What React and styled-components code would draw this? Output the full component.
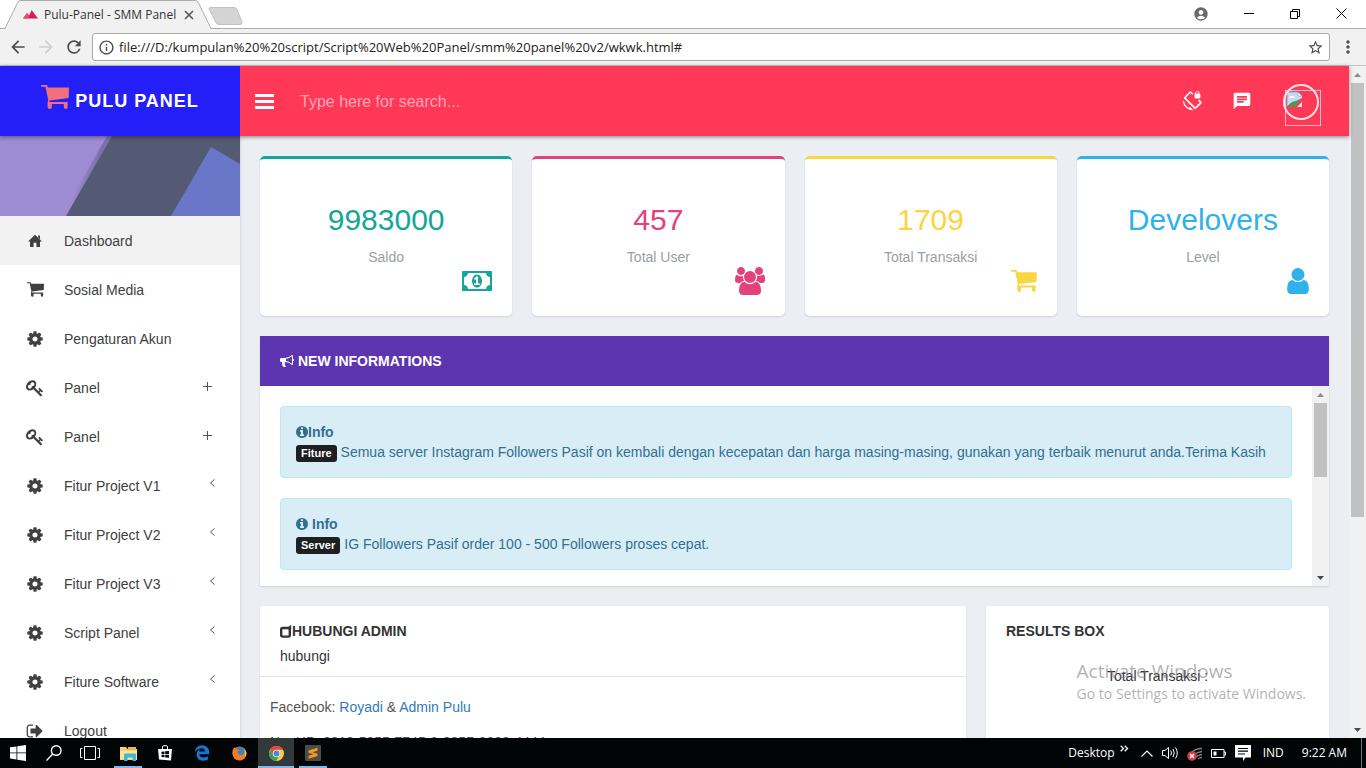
import React from "react";
import styled, { createGlobalStyle } from "styled-components";
import {
  MdAccountCircle,
  MdArrowBack,
  MdArrowForward,
  MdChat,
  MdInfoOutline,
  MdMoreVert,
  MdRefresh,
  MdScreenLockRotation,
  MdStarBorder,
} from "react-icons/md";
import { FaEdgeLegacy } from "react-icons/fa";

const uiFont = `"Open Sans", "Noto Sans", sans-serif`;
const pageFont = `"Liberation Sans", Arial, sans-serif`;

const GlobalStyle = createGlobalStyle`
  *, *::before, *::after { box-sizing: border-box; }
  html, body { margin: 0; padding: 0; }
  body { font-family: ${pageFont}; font-size: 14px; line-height: 20px; color: #333; }
  button { border: 0; padding: 0; margin: 0; background: none; font: inherit; color: inherit; cursor: pointer; }
  h1, h2, h3, p, ul { margin: 0; padding: 0; font-weight: normal; font-size: inherit; }
  ul { list-style: none; }
  svg { display: block; flex: none; }
`;

/* ---------- glyphs ---------- */

const glyphs = {
  cog: ["0 0 1792 1792", "M1152 896q0-106-75-181t-181-75-181 75-75 181 75 181 181 75 181-75 75-181zm512-109v222q0 12-8 23t-20 13l-185 28q-19 54-39 91 35 50 107 138 10 12 10 25t-9 23q-27 37-99 108t-94 71q-12 0-26-9l-138-108q-44 23-91 38-16 136-29 186-7 28-36 28h-222q-14 0-24.5-8.5t-11.5-21.5l-28-184q-49-16-90-37l-141 107q-10 9-25 9-14 0-25-11-126-114-165-168-7-10-7-23 0-12 8-23 15-21 51-66.5t54-70.5q-27-50-41-99l-183-27q-13-2-21-12.5t-8-23.5v-222q0-12 8-23t19-13l186-28q14-46 39-92-40-57-107-138-10-12-10-24 0-10 9-23 26-36 98.5-107.5t94.5-71.5q13 0 26 10l138 107q44-23 91-38 16-136 29-186 7-28 36-28h222q14 0 24.5 8.5t11.5 21.5l28 184q49 16 90 37l142-107q9-9 24-9 13 0 25 10 129 119 165 170 7 8 7 22 0 12-8 23-15 21-51 66.5t-54 70.5q26 50 41 98l183 28q13 2 21 12.5t8 23.5z"],
  key: ["0 0 1792 1792", "M832 512q0-80-56-136t-136-56-136 56-56 136q0 42 19 83-41-19-83-19-80 0-136 56t-56 136 56 136 136 56 136-56 56-136q0-42-19-83 41 19 83 19 80 0 136-56t56-136zm851 704q0 17-49 66t-66 49q-9 0-28.5-16t-36.5-33-38.5-40-24.5-26l-96 96 220 220q28 28 28 68 0 42-39 81t-81 39q-40 0-68-28l-671-671q-176 131-365 131-163 0-265.5-102.5t-102.5-265.5q0-160 95-313t248-248 313-95q163 0 265.5 102.5t102.5 265.5q0 189-131 365l355 355 96-96q-3-3-26-24.5t-40-38.5-33-36.5-16-28.5q0-17 49-66t66-49q13 0 23 10 6 6 46 44.5t82 79.5 86.5 86 73 78 28.5 41z"],
  signOut: ["0 0 1792 1792", "M704 1440q0 4 1 20t.5 26.5-3 23.5-10 19.5-20.5 6.5h-320q-119 0-203.5-84.5t-84.5-203.5v-704q0-119 84.5-203.5t203.5-84.5h320q13 0 22.5 9.5t9.5 22.5q0 4 1 20t.5 26.5-3 23.5-10 19.5-20.5 6.5h-320q-66 0-113 47t-47 113v704q0 66 47 113t113 47h312l11.5 1 11.5 3 8 5.5 7 9 2 13.5zm928-544q0 26-19 45l-544 544q-19 19-45 19t-45-19-19-45v-288h-448q-26 0-45-19t-19-45v-384q0-26 19-45t45-19h448v-288q0-26 19-45t45-19 45 19l544 544q19 19 19 45z"],
  user: ["256 128 1280 1536", "M1536 1399q0 109-62.5 187t-150.5 78h-854q-88 0-150.5-78t-62.5-187q0-85 8.5-160.5t31.5-152 58.5-131 94-89 134.5-34.5q131 128 313 128t313-128q76 0 134.5 34.5t94 89 58.5 131 31.5 152 8.5 160.5zm-256-887q0 159-112.5 271.5t-271.5 112.5-271.5-112.5-112.5-271.5 112.5-271.5 271.5-112.5 271.5 112.5 112.5 271.5z"],
  users: ["-64 0 1920 1792", "M529 896q-162 5-265 128h-134q-82 0-138-40.5t-56-118.5q0-353 124-353 6 0 43.5 21t97.5 42.5 119 21.5q67 0 133-23-5 37-5 66 0 159 90 294zm1071 637q0 120-73 189.5t-194 69.5h-874q-121 0-194-69.5t-73-189.5q0-53 3.5-103.5t14-109 26.5-108.5 43-97.5 62-81 85.5-53.5 111.5-20q10 0 43 21.5t73 48 107 48 135 21.5 135-21.5 107-48 73-48 43-21.5q61 0 111.5 20t85.5 53.5 62 81 43 97.5 26.5 108.5 14 109 3.5 103.5zm-1024-1277q0 106-75 181t-181 75-181-75-75-181 75-181 181-75 181 75 75 181zm704 384q0 159-112.5 271.5t-271.5 112.5-271.5-112.5-112.5-271.5 112.5-271.5 271.5-112.5 271.5 112.5 112.5 271.5zm576 225q0 78-56 118.5t-138 40.5h-134q-103-123-265-128 90-135 90-294 0-29-5-66 66 23 133 23 59 0 119-21.5t97.5-42.5 43.5-21q124 0 124 353zm-128-609q0 106-75 181t-181 75-181-75-75-181 75-181 181-75 181 75 75 181z"],
  money: ["0 0 1920 1792", "M768 1152h384v-96h-128v-448h-114l-148 137 77 80q42-37 55-57h2v288h-128v96zm512-256q0 70-21 142t-59.5 134-101.5 101-138 39-138-39-101.5-101-59.5-134-21-142 21-142 59.5-134 101.5-101 138-39 138 39 101.5 101 59.5 134 21 142zm512 256v-512q-106 0-181-75t-75-181h-1152q0 106-75 181t-181 75v512q106 0 181 75t75 181h1152q0-106 75-181t181-75zm128-832v1152q0 26-19 45t-45 19h-1792q-26 0-45-19t-19-45v-1152q0-26 19-45t45-19h1792q26 0 45 19t19 45z"],
  bullhorn: ["0 0 1792 1792", "M1664 640q53 0 90.5 37.5t37.5 90.5-37.5 90.5-90.5 37.5v384q0 52-38 90t-90 38q-417-347-812-380-58 19-91 66t-31 100.5 40 92.5q-20 33-23 65.5t6 58 33.5 55 48 50 61.5 50.5q-29 58-111.5 83t-168.5 11.5-132-55.5q-7-23-29.5-87.5t-32-94.5-23-89-15-101 3.5-98.5 22-110.5h-122q-66 0-113-47t-47-113v-192q0-66 47-113t113-47h480q435 0 896-384 52 0 90 38t38 90v384zm-128 604v-954q-394 302-768 343v270q377 42 768 341z"],
  info: ["128 128 1536 1536", "M1152 1376v-160q0-14-9-23t-23-9h-96v-512q0-14-9-23t-23-9h-320q-14 0-23 9t-9 23v160q0 14 9 23t23 9h96v320h-96q-14 0-23 9t-9 23v160q0 14 9 23t23 9h448q14 0 23-9t9-23zm-128-896v-160q0-14-9-23t-23-9h-192q-14 0-23 9t-9 23v160q0 14 9 23t23 9h192q14 0 23-9t9-23zm640 416q0 209-103 385.5t-279.5 279.5-385.5 103-385.5-103-279.5-279.5-103-385.5 103-385.5 279.5-279.5 385.5-103 385.5 103 279.5 279.5 103 385.5z"],
  home: ["0 0 16 16", "M8 1.8 15 8.4H13V14H9.4V9.8H6.600V14H3V8.400H1L8 1.8ZM11.200 2.600H13V6.200L11.200 4.400Z"],
  cart: ["0 0 28 24", "M0 0H6L6.7 2.4H28L27.7 13 8.600 15.400 8.200 17H26.600V22.200Q26.600 24 25 24T22.800 22.200V19H10.800V22.200Q10.800 24 9 24T6.600 22.200V17.500L7.300 15.200 4.400 1.800H0Z"],
};

const Glyph = ({ name, size = 18, height }) => {
  const [box, path] = glyphs[name];
  return (
    <svg width={size} height={height || size} viewBox={box} fill="currentColor" aria-hidden="true">
      <path d={path} />
    </svg>
  );
};

/* ---------- browser frame ---------- */

const Screen = styled.div`
  display: flex;
  flex-direction: column;
  height: 100vh;
  overflow: hidden;
`;

const TabStrip = styled.div`
  display: flex;
  flex: none;
  height: 29px;
  background: #fff;
  border-bottom: 1px solid #adadad;
  font-family: ${uiFont};
`;

const Tab = styled.div`
  position: relative;
  display: flex;
  align-items: center;
  gap: 6px;
  width: 206px;
  height: 29px;
  margin-left: 5px;
  padding: 0 16px 0 18px;
  font-size: 12px;
  color: #333;
  > * { position: relative; }
  > svg:first-child { position: absolute; left: 0; top: 0; }
`;

const TabTitle = styled.span`
  flex: 1;
  white-space: nowrap;
`;

const NewTab = styled.button`
  height: 29px;
  margin-left: -3px;
  padding-top: 1px;
`;

const WindowControls = styled.div`
  display: flex;
  align-items: center;
  margin-left: auto;
  padding-right: 2px;
  height: 27px;
`;

const WindowButton = styled.button`
  display: flex;
  align-items: center;
  justify-content: center;
  width: ${(p) => (p.$wide ? "50px" : "46px")};
  height: 26px;
  color: ${(p) => (p.$wide ? "#6a6a6a" : "#000")};
`;

const Toolbar = styled.div`
  display: flex;
  align-items: center;
  flex: none;
  height: 37px;
  padding: 0 8px 0 4px;
  background: #f1f1f1;
  border-bottom: 1px solid #c4c4c4;
  color: #4d4d4d;
`;

const ToolButton = styled.button`
  display: flex;
  align-items: center;
  justify-content: center;
  width: 28px;
  height: 28px;
  color: ${(p) => (p.$faded ? "#cfcfcf" : "#4d4d4d")};
`;

const MenuButton = styled(ToolButton)`
  width: 20px;
  margin-left: 8px;
`;

const Omnibox = styled.label`
  display: flex;
  align-items: center;
  flex: 1;
  gap: 4px;
  height: 28px;
  margin-left: 4px;
  padding: 0 5px;
  background: #fff;
  border: 1px solid #a9a9a9;
  border-radius: 3px;
`;

const Address = styled.input`
  flex: 1;
  min-width: 0;
  padding: 0;
  border: 0;
  outline: 0;
  font-family: ${uiFont};
  font-size: 13px;
  line-height: 20px;
  color: #222;
`;

/* ---------- scroll bars ---------- */

const Track = styled.div`
  display: flex;
  flex-direction: column;
  flex: none;
  width: 17px;
  background: #f1f1f1;
`;

const ScrollArrow = styled.button`
  display: flex;
  align-items: center;
  justify-content: center;
  flex: none;
  height: 17px;
`;

const Lane = styled.div`
  flex: 1;
  padding: 0 2px;
`;

const Thumb = styled.div`
  height: ${(p) => p.$size};
  background: #c1c1c1;
`;

const ScrollBar = ({ size }) => (
  <Track>
    <ScrollArrow aria-label="Scroll up">
      <svg width="7" height="4" viewBox="0 0 7 4"><path d="M3.5 0 7 4H0Z" fill="#8a8a8a" /></svg>
    </ScrollArrow>
    <Lane><Thumb $size={size} /></Lane>
    <ScrollArrow aria-label="Scroll down">
      <svg width="7" height="4" viewBox="0 0 7 4"><path d="M0 0H7L3.5 4Z" fill="#4a4a4a" /></svg>
    </ScrollArrow>
  </Track>
);

/* ---------- page shell ---------- */

const Viewport = styled.div`
  display: flex;
  flex: 1;
  min-height: 0;
`;

const Page = styled.div`
  display: flex;
  flex-direction: column;
  flex: 1;
  min-width: 0;
  background: #ebeef2;
`;

const Header = styled.header`
  position: relative;
  z-index: 2;
  display: flex;
  flex: none;
  height: 70px;
  background: #ff3857;
  box-shadow: 0 1px 4px rgba(0, 0, 0, 0.45);
`;

const Brand = styled.a`
  display: flex;
  align-items: center;
  justify-content: center;
  gap: 6px;
  flex: none;
  width: 240px;
  background: #241ff8;
  color: #fff;
  font-size: 18px;
  font-weight: bold;
  letter-spacing: 1px;
  text-decoration: none;
  svg { color: #f2707c; margin-bottom: 8px; }
`;

const HeaderBar = styled.div`
  display: flex;
  align-items: center;
  flex: 1;
  padding: 0 28px 0 14px;
  color: #fff;
`;

const HeaderButton = styled.button`
  display: flex;
  align-items: center;
  justify-content: center;
  width: ${(p) => (p.$narrow ? "20px" : "50px")};
  height: 40px;
`;

const Search = styled.input`
  flex: 1;
  min-width: 0;
  margin-left: 26px;
  padding: 1px 0 0;
  border: 0;
  outline: 0;
  background: transparent;
  font-family: ${pageFont};
  font-size: 16px;
  line-height: 20px;
  color: #fff;
  &::placeholder { color: #ffa5b3; opacity: 1; }
`;

const Avatar = styled.button`
  width: 40px;
  height: 44px;
  margin: 6px 0 0 14px;
`;

const Columns = styled.div`
  display: flex;
  flex: 1;
  min-height: 0;
`;

const Sidebar = styled.nav`
  flex: none;
  width: 240px;
  overflow: hidden;
  background: #fff;
  box-shadow: 0 0 3px rgba(0, 0, 0, 0.2);
`;

const Cover = styled.div`
  height: 80px;
  overflow: hidden;
`;

const NavLink = styled.a`
  display: flex;
  align-items: center;
  height: 49px;
  padding: 0 24px 0 26px;
  background: ${(p) => (p.$active ? "#f2f2f2" : "transparent")};
  color: #404040;
  font-size: 14px;
  text-decoration: none;
`;

const NavIcon = styled.span`
  display: flex;
  justify-content: center;
  width: 18px;
  margin-right: 20px;
`;

const NavLabel = styled.span`
  flex: 1;
`;

const NavSign = styled.span`
  padding: ${(p) => (p.$plus ? "0 4px 2px 0" : "0 0 5px")};
`;

const Content = styled.main`
  flex: 1;
  min-width: 0;
  padding: 20px;
  overflow: hidden;
`;

const Grid = styled.div`
  display: grid;
  grid-template-columns: repeat(12, 1fr);
  gap: 20px;
  align-items: start;
`;

/* ---------- cards ---------- */

const Card = styled.section`
  grid-column: span ${(p) => p.$span};
  min-width: 0;
  background: #fff;
  border-radius: ${(p) => (p.$square ? "0" : "3px")};
  box-shadow: 0 1px 2px rgba(0, 0, 0, 0.12);
  overflow: hidden;
`;

const StatCard = styled(Card)`
  display: flex;
  flex-direction: column;
  align-items: center;
  height: 160px;
  padding: 44px 20px 0;
  border-top: 3px solid ${(p) => p.$tone};
  border-radius: 5px;
  color: ${(p) => p.$tone};
`;

const StatValue = styled.h2`
  font-size: 30px;
  line-height: 34px;
`;

const StatLabel = styled.p`
  margin-top: 10px;
  color: #98a0a6;
`;

const StatIcon = styled.span`
  display: flex;
  align-items: center;
  justify-content: center;
  align-self: flex-end;
  height: 30px;
  margin-top: -1px;
`;

const Banner = styled.header`
  display: flex;
  align-items: center;
  gap: 4px;
  height: 50px;
  padding: 0 20px;
  background: #5e35b1;
  color: #fff;
`;

const CardTitle = styled.h3`
  display: flex;
  align-items: center;
  font-size: 14px;
  font-weight: bold;
`;

const Feed = styled.div`
  display: flex;
  height: 200px;
`;

const FeedList = styled.div`
  display: flex;
  flex-direction: column;
  flex: 1;
  gap: 20px;
  min-width: 0;
  padding: 20px;
  overflow: hidden;
`;

const Notice = styled.article`
  padding: 15px;
  background: #d9edf7;
  border: 1px solid #bce8f1;
  border-radius: 4px;
  color: #31708f;
`;

const NoticeTitle = styled.h4`
  display: flex;
  align-items: center;
  gap: ${(p) => (p.$tight ? "0" : "4px")};
  margin: 0;
  font-size: 14px;
`;

const NoticeText = styled.p`
  display: flex;
  align-items: center;
  gap: 4px;
  white-space: nowrap;
`;

const Badge = styled.span`
  padding: 0 5px;
  margin-top: 2px;
  background: #1d1f20;
  border-radius: 3px;
  color: #fff;
  font-size: 11px;
  font-weight: bold;
  line-height: 17px;
`;

const CardHead = styled.header`
  padding: 15px 20px 10px;
  border-bottom: ${(p) => (p.$ruled ? "1px solid #e6e6e6" : "0")};
`;

const Subtitle = styled.p`
  margin-top: 5px;
`;

const CardBody = styled.div`
  display: flex;
  flex-direction: column;
  gap: 15px;
  padding: 20px 10px;
  color: #555;
  text-align: ${(p) => (p.$centered ? "center" : "left")};
`;

const ResultBody = styled(CardBody)`
  padding: 15px 10px 80px;
  color: #333;
`;

const Link = styled.a`
  color: #337ab7;
  text-decoration: none;
`;

const Watermark = styled.aside`
  position: absolute;
  right: 60px;
  bottom: 64px;
  z-index: 3;
  font-family: ${uiFont};
  font-size: 14px;
  line-height: 20px;
  font-weight: 300;
  color: rgba(125, 125, 125, 0.6);
  pointer-events: none;
`;

const WatermarkTitle = styled.p`
  font-size: 19px;
  line-height: 26px;
`;

/* ---------- taskbar ---------- */

const Taskbar = styled.footer`
  display: flex;
  flex: none;
  height: 30px;
  background: #010506;
  color: #fff;
  font-family: ${uiFont};
  font-size: 12px;
`;

const TaskGroup = styled.div`
  display: flex;
  gap: ${(p) => (p.$apps ? "1px" : "0")};
  margin-right: 2px;
`;

const TaskButton = styled.button`
  position: relative;
  display: flex;
  align-items: center;
  justify-content: center;
  width: 36px;
  height: 30px;
  background: ${(p) => (p.$active ? "#33383b" : "transparent")};
  &::after {
    content: "";
    position: absolute;
    bottom: 0;
    left: ${(p) => (p.$active ? "0" : "4px")};
    right: ${(p) => (p.$active ? "0" : "4px")};
    height: 2px;
    background: ${(p) => (p.$active || p.$open ? "#7ab8ee" : "transparent")};
  }
`;

const Tray = styled.div`
  display: flex;
  align-items: center;
  margin-left: auto;
  padding-right: 4px;
`;

const TrayButton = styled.button`
  display: flex;
  align-items: center;
  justify-content: center;
  width: ${(p) => (p.$narrow ? "20px" : "24px")};
  height: 30px;
`;

const TrayText = styled.span`
  margin: 0 ${(p) => p.$after || "0"} 0 ${(p) => p.$before || "0"};
  white-space: nowrap;
`;

const Edge = styled.span`
  width: 1px;
  height: 30px;
  background: #6c7072;
`;

/* ---------- data ---------- */

const navItems = [
  { icon: "home", label: "Dashboard", active: true },
  { icon: "cart", label: "Sosial Media" },
  { icon: "cog", label: "Pengaturan Akun" },
  { icon: "key", label: "Panel", sign: "plus" },
  { icon: "key", label: "Panel", sign: "plus" },
  { icon: "cog", label: "Fitur Project V1", sign: "left" },
  { icon: "cog", label: "Fitur Project V2", sign: "left" },
  { icon: "cog", label: "Fitur Project V3", sign: "left" },
  { icon: "cog", label: "Script Panel", sign: "left" },
  { icon: "cog", label: "Fiture Software", sign: "left" },
  { icon: "signOut", label: "Logout" },
];

const stats = [
  { value: "9983000", label: "Saldo", tone: "#16a596", icon: <Glyph name="money" size={30} height={28} /> },
  { value: "457", label: "Total User", tone: "#e3437b", icon: <Glyph name="users" size={30} height={28} /> },
  { value: "1709", label: "Total Transaksi", tone: "#fad541", icon: <Glyph name="cart" size={26} height={22} /> },
  { value: "Develovers", label: "Level", tone: "#2fb2ec", icon: <Glyph name="user" size={22} height={26} /> },
];

const notices = [
  {
    tight: true,
    title: "Info",
    badge: "Fiture",
    text: "Semua server Instagram Followers Pasif on kembali dengan kecepatan dan harga masing-masing, gunakan yang terbaik menurut anda.Terima Kasih",
  },
  { title: "Info", badge: "Server", text: "IG Followers Pasif order 100 - 500 Followers proses cepat." },
];

/* ---------- parts ---------- */

const BrowserChrome = () => (
  <>
    <TabStrip>
      <Tab>
        <svg width="206" height="29" viewBox="0 0 206 29">
          <path d="M0 29 13 2Q14 .5 16 .5H190Q192 .5 193 2L206 29Z" fill="#f1f1f1" />
          <path d="M0 28.5 13 2Q14 .5 16 .5H190Q192 .5 193 2L206 28.5" fill="none" stroke="#adadad" />
        </svg>
        <svg width="15" height="10" viewBox="0 0 15 10">
          <path d="M0 8.500 4 3 6.200 5.500 8.600 0 15 8.500Z" fill="#d81b60" />
          <path d="M4 3 6.200 5.500 5 8.500H0Z" fill="#e8505f" />
        </svg>
        <TabTitle>Pulu-Panel - SMM Panel</TabTitle>
        <button aria-label="Close tab">
          <svg width="12" height="12" viewBox="0 0 12 12" stroke="#555" strokeWidth="1.6"><path d="M2 2 10 10M10 2 2 10" /></svg>
        </button>
      </Tab>
      <NewTab aria-label="New tab">
        <svg width="36" height="22" viewBox="0 0 36 22">
          <path d="M3 3.500H26Q28 3.500 29 5.500L34 18Q34.500 20.500 32 20.500H11Q9 20.500 8 18.500L1.500 6Q0 3.500 3 3.500Z" fill="#d4d4d4" stroke="#c2c2c2" />
        </svg>
      </NewTab>
      <WindowControls>
        <WindowButton $wide aria-label="Account"><MdAccountCircle size={16} /></WindowButton>
        <WindowButton aria-label="Minimize">
          <svg width="10" height="10" viewBox="0 0 10 10" stroke="currentColor"><path d="M0 4.500H10" /></svg>
        </WindowButton>
        <WindowButton aria-label="Restore">
          <svg width="10" height="10" viewBox="0 0 10 10" stroke="currentColor" fill="none"><path d="M.5 2.500H7.500V9.500H.5ZM2.500 2.500V.5H9.500V7.500H7.500" /></svg>
        </WindowButton>
        <WindowButton aria-label="Close">
          <svg width="11" height="11" viewBox="0 0 11 11" stroke="currentColor"><path d="M.5.5 10.500 10.500M10.500.5.5 10.500" /></svg>
        </WindowButton>
      </WindowControls>
    </TabStrip>
    <Toolbar>
      <ToolButton aria-label="Back"><MdArrowBack size={20} /></ToolButton>
      <ToolButton $faded aria-label="Forward"><MdArrowForward size={20} /></ToolButton>
      <ToolButton aria-label="Reload"><MdRefresh size={20} /></ToolButton>
      <Omnibox>
        <MdInfoOutline size={17} />
        <Address aria-label="Address" defaultValue="file:///D:/kumpulan%20%20script/Script%20Web%20Panel/smm%20panel%20v2/wkwk.html#" />
        <MdStarBorder size={17} />
      </Omnibox>
      <MenuButton aria-label="Menu"><MdMoreVert size={20} /></MenuButton>
    </Toolbar>
  </>
);

const PageHeader = () => (
  <Header>
    <Brand href="#">
      <Glyph name="cart" size={28} height={24} />
      PULU PANEL
    </Brand>
    <HeaderBar>
      <HeaderButton $narrow aria-label="Toggle menu">
        <svg width="19" height="15" viewBox="0 0 19 15" fill="#fff"><path d="M0 0H19V3H0ZM0 6H19V9H0ZM0 12H19V15H0Z" /></svg>
      </HeaderButton>
      <Search aria-label="Search" placeholder="Type here for search..." />
      <HeaderButton aria-label="Lock rotation"><MdScreenLockRotation size={20} /></HeaderButton>
      <HeaderButton aria-label="Messages"><MdChat size={20} /></HeaderButton>
      <Avatar aria-label="Profile">
        <svg width="40" height="44" viewBox="0 0 40 44" fill="none">
          <rect x="4.500" y="8.500" width="35" height="35" stroke="#f8b9c3" />
          <path d="M6 10H17L21 14V16L6 24Z" fill="#c7d9f7" />
          <path d="M17 10V14H21Z" fill="#fff" stroke="#8ba3c4" strokeWidth=".7" />
          <path d="M6 10H17M6 10V25" stroke="#8ba3c4" />
          <path d="M9 15Q10 13 12 14T14 16H8Z" fill="#fff" />
          <path d="M6 25Q10 19 15 19L20 17 14 25Z" fill="#4e9a48" />
          <path d="M16 25 21 20V25Z" fill="#e9edf3" />
          <circle cx="20" cy="20" r="17" stroke="#ffe3e8" strokeWidth="2" />
        </svg>
      </Avatar>
    </HeaderBar>
  </Header>
);

const SideNav = () => (
  <Sidebar>
    <Cover>
      <svg width="240" height="80" viewBox="0 0 240 80">
        <defs>
          <linearGradient id="fold" x1="0.4" y1="0.45" x2="0.6" y2="0.55">
            <stop offset="0" stopColor="#3d3f58" stopOpacity="0" />
            <stop offset="1" stopColor="#3d3f58" stopOpacity=".35" />
          </linearGradient>
        </defs>
        <rect width="240" height="80" fill="#545a73" />
        <path d="M0 0H112L66 80H0Z" fill="#9d8bd3" />
        <path d="M107 0H112L66 80H61Z" fill="url(#fold)" />
        <path d="M211 11 240 28V80H171Z" fill="#6a76c8" />
      </svg>
    </Cover>
    <ul>
      {navItems.map((item, i) => (
        <li key={i}>
          <NavLink href="#" $active={item.active}>
            <NavIcon><Glyph name={item.icon} size={item.icon === "home" ? 16 : item.icon === "cart" ? 17 : 18} /></NavIcon>
            <NavLabel>{item.label}</NavLabel>
            {item.sign === "plus" && (
              <NavSign $plus>
                <svg width="9" height="9" viewBox="0 0 9 9" stroke="#555"><path d="M4.500 0V9M0 4.500H9" /></svg>
              </NavSign>
            )}
            {item.sign === "left" && (
              <NavSign>
                <svg width="7" height="8" viewBox="0 0 7 8" stroke="#555" fill="none"><path d="M5.500.5 1.500 4 5.500 7.500" /></svg>
              </NavSign>
            )}
          </NavLink>
        </li>
      ))}
    </ul>
  </Sidebar>
);

const Dashboard = () => (
  <Content>
    <Grid>
      {stats.map((s) => (
        <StatCard key={s.label} $span={3} $tone={s.tone}>
          <StatValue>{s.value}</StatValue>
          <StatLabel>{s.label}</StatLabel>
          <StatIcon>{s.icon}</StatIcon>
        </StatCard>
      ))}
      <Card $span={12} $square>
        <Banner>
          <Glyph name="bullhorn" size={14} />
          <CardTitle>NEW INFORMATIONS</CardTitle>
        </Banner>
        <Feed>
          <FeedList>
            {notices.map((n) => (
              <Notice key={n.badge}>
                <NoticeTitle $tight={n.tight}><Glyph name="info" size={12} />{n.title}</NoticeTitle>
                <NoticeText><Badge>{n.badge}</Badge>{n.text}</NoticeText>
              </Notice>
            ))}
          </FeedList>
          <ScrollBar size="74px" />
        </Feed>
      </Card>
      <Card $span={8}>
        <CardHead $ruled>
          <CardTitle>
            <svg width="12" height="14" viewBox="0 0 12 14" fill="none">
              <rect x="1.200" y="4" width="8.600" height="8.600" rx="1.500" stroke="#333" strokeWidth="2.400" />
              <path d="M7.500 3.500 11.200 .8V6H9Z" fill="#333" />
            </svg>
            HUBUNGI ADMIN
          </CardTitle>
          <Subtitle>hubungi</Subtitle>
        </CardHead>
        <CardBody>
          <p>Facebook: <Link href="#">Royadi</Link> &amp; <Link href="#">Admin Pulu</Link></p>
          <p>No. HP: 0812-5355-7745 &amp; 0857-2632-4444</p>
        </CardBody>
      </Card>
      <Card $span={4}>
        <CardHead>
          <CardTitle>RESULTS BOX</CardTitle>
        </CardHead>
        <ResultBody $centered>
          <p>Total Transaksi :</p>
        </ResultBody>
      </Card>
    </Grid>
  </Content>
);

const DesktopBar = () => (
  <Taskbar>
    <TaskGroup>
      <TaskButton aria-label="Start">
        <svg width="16" height="16" viewBox="0 0 16 16" fill="#fff"><path d="M0 2.300 6.500 1.400V7.500H0ZM7.300 1.300 16 0V7.500H7.300ZM0 8.300H6.500V14.500L0 13.600ZM7.300 8.300H16V16L7.300 14.700Z" /></svg>
      </TaskButton>
      <TaskButton aria-label="Search">
        <svg width="16" height="16" viewBox="0 0 16 16" stroke="#fff" strokeWidth="1.400" fill="none"><circle cx="10.200" cy="5.500" r="4.800" /><path d="M6.800 9 .5 15.500" /></svg>
      </TaskButton>
      <TaskButton aria-label="Task view">
        <svg width="20" height="14" viewBox="0 0 20 14" stroke="#fff" fill="none"><path d="M4.500.5H15.500V13.500H4.500ZM2.500 2.500H.5V11.500H2.500M17.500 2.500H19.500V11.500H17.500" /></svg>
      </TaskButton>
    </TaskGroup>
    <TaskGroup $apps>
      <TaskButton $open aria-label="File Explorer">
        <svg width="17" height="15" viewBox="0 0 17 15"><path d="M0 1H6L7.500 3H17V14H0Z" fill="#f3d374" /><path d="M8 1H16V4H8Z" fill="#e5b94b" /><path d="M0 5H17V13H0Z" fill="#fae394" /><path d="M4 15V8.500Q4 7.500 5 7.500H15Q16 7.500 16 8.500V15H12.500V11.500H7.500V15Z" fill="#3fb5d8" /></svg>
      </TaskButton>
      <TaskButton aria-label="Store">
        <svg width="14" height="16" viewBox="0 0 14 16"><path d="M4.500 4V2Q4.500.7 6 .7H8Q9.500.7 9.500 2V4" stroke="#fff" fill="none" /><path d="M0 4H14L13 15.500 1 14.500Z" fill="#fff" /><path d="M3.500 6.700 6.500 6.400V9H3.500ZM7.200 6.300 11 6V9H7.200ZM3.500 9.700H6.500V12.300L3.500 12ZM7.200 9.700H11V12.800L7.200 12.400Z" fill="#010506" /></svg>
      </TaskButton>
      <TaskButton aria-label="Edge"><FaEdgeLegacy size={16} color="#1b74d0" /></TaskButton>
      <TaskButton aria-label="Firefox">
        <svg width="15" height="15" viewBox="0 0 15 15"><circle cx="7.500" cy="7.500" r="7" fill="#e8681c" /><circle cx="8" cy="6" r="5" fill="#3d7fc0" /><path d="M.5 5Q1 2 3 1.200L4.500 3.500 7.500 4 5.500 6Q6 9 9 9 12 9 13 5L14.400 6Q14.800 12 9.500 14.200 4 15 1.500 11 .2 8.500.5 5Z" fill="#ed7f22" /><path d="M12 3Q14.500 5 14 9L12.500 11Q13.500 7 12 3Z" fill="#f8c93e" /></svg>
      </TaskButton>
      <TaskButton $active aria-label="Chrome">
        <svg width="15" height="15" viewBox="0 0 15 15"><circle cx="7.500" cy="7.500" r="7.500" fill="#fbcb3a" /><path d="M1 3.800A7.500 7.500 0 0 1 14 3.800H7.500L4.200 9.300Z" fill="#e2493b" /><path d="M1 3.800A7.500 7.500 0 0 0 7 15L10.600 9.300 7.500 11 4.200 9.300Z" fill="#38a156" /><circle cx="7.500" cy="7.500" r="3.700" fill="#f4f4f4" /><circle cx="7.500" cy="7.500" r="2.900" fill="#4a85ed" /></svg>
      </TaskButton>
      <TaskButton $open aria-label="Sublime Text">
        <svg width="16" height="16" viewBox="0 0 16 16"><rect width="16" height="16" rx="1" fill="#4c4c4c" /><path d="M3.500 5.500 12.500 2.800V5.800L7.500 7.300 12.500 8.800V11L3.500 13.700V10.700L8.500 9.200 3.500 7.700Z" fill="#f9981e" /></svg>
      </TaskButton>
    </TaskGroup>
    <Tray>
      <TrayText>Desktop</TrayText>
      <TrayButton $narrow aria-label="More toolbars">
        <svg width="9" height="16" viewBox="0 0 9 16" stroke="#fff" strokeWidth="1.300" fill="none"><path d="M.7.700 3.500 3.500.7 6.300M4.700.7 7.500 3.500 4.700 6.300" /></svg>
      </TrayButton>
      <TrayButton aria-label="Hidden icons">
        <svg width="12" height="7" viewBox="0 0 12 7" stroke="#fff" strokeWidth="1.200" fill="none"><path d="M.5 6.500 6 1 11.500 6.500" /></svg>
      </TrayButton>
      <TrayButton aria-label="Volume">
        <svg width="17" height="14" viewBox="0 0 17 14" stroke="#fff" fill="none"><path d="M.5 4.500H3L6.500 1.500V12.500L3 9.500H.5ZM8.700 4.500Q10.300 7 8.700 9.500M11 3Q13.500 7 11 11M13.500 1.500Q17 7 13.500 12.500" /></svg>
      </TrayButton>
      <TrayButton aria-label="Network">
        <svg width="16" height="16" viewBox="0 0 16 16" fill="none"><path d="M4 8Q8 3.500 15 3.500M7 10Q10 7 15 6.500M9 12Q11 10 15 9.500M11 14Q12.500 12.500 15 12.500" stroke="#7b8082" strokeWidth="1.300" /><circle cx="5" cy="11" r="4.800" fill="#d23b45" /><path d="M3 9 7 13M7 9 3 13" stroke="#fff" strokeWidth="1.400" /></svg>
      </TrayButton>
      <TrayButton aria-label="Battery">
        <svg width="15" height="9" viewBox="0 0 15 9"><path d="M.5.5H13V8.500H.5ZM13 3H14.500V6H13" stroke="#fff" fill="none" /><path d="M2.500 2.500H5.500V6.500H2.500Z" fill="#fff" /></svg>
      </TrayButton>
      <TrayButton aria-label="Notifications">
        <svg width="16" height="16" viewBox="0 0 16 16"><path d="M0 0H16V12.500H10.500L8 16V12.500H0Z" fill="#fff" /><path d="M3 3.500H13M3 6.200H13M3 9H10" stroke="#010506" strokeWidth="1.200" /></svg>
      </TrayButton>
      <TrayText $before="8px" $after="18px">IND</TrayText>
      <TrayText $after="14px">9:22 AM</TrayText>
      <Edge />
    </Tray>
  </Taskbar>
);

export default function App() {
  return (
    <Screen>
      <GlobalStyle />
      <BrowserChrome />
      <Viewport>
        <Page>
          <PageHeader />
          <Columns>
            <SideNav />
            <Dashboard />
          </Columns>
        </Page>
        <ScrollBar size="68%" />
      </Viewport>
      <DesktopBar />
      <Watermark>
        <WatermarkTitle>Activate Windows</WatermarkTitle>
        <p>Go to Settings to activate Windows.</p>
      </Watermark>
    </Screen>
  );
}
